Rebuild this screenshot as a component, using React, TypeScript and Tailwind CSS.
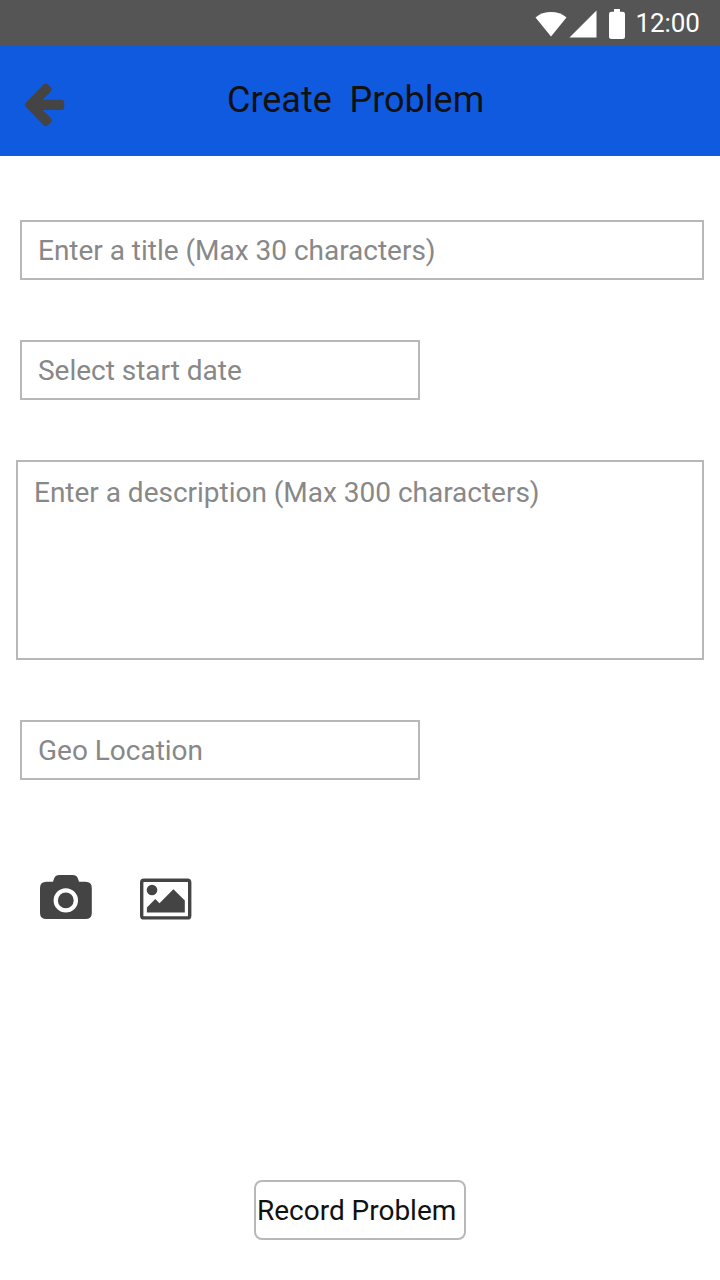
import React from "react";

function BackArrow() {
  return (
    <svg className="mt-[36px] ml-[24px] h-[46px] w-[42px] shrink-0" viewBox="24 82 42 46" fill="#444444">
      <path d="M25.500 103.100 43.600 84.400Q45.800 82.500 48.100 84.400L50.700 87Q52.700 89.400 50.700 91.700L42.600 99.700H61.300Q64.200 99.700 64.200 102.500V107.300Q64.200 110 61.300 110H42.600L50.700 118Q52.700 120.300 50.700 122.600L48.100 125.200Q45.800 127 43.600 125.200L25.500 106.400Q24.400 104.700 25.500 103.100Z" />
    </svg>
  );
}

function Camera() {
  return (
    <svg className="h-[52px] w-[52px]" viewBox="40 872 52 52" fill="#444444">
      <path fillRule="evenodd" d="M46.500 881.800H53L54.200 878.200Q55.500 875 59.500 875H72.500Q76.600 875 77.800 878.200L79 881.800H85.500Q91.800 881.800 91.800 888V913Q91.800 919 85.500 919H46.500Q40 919 40 913V888Q40 881.800 46.500 881.800ZM65.800 888.200A12.200 12.200 0 1 0 65.800 912.600A12.200 12.200 0 1 0 65.800 888.200Z" />
      <circle cx="65.8" cy="900.4" r="7.9" />
    </svg>
  );
}

function Picture() {
  return (
    <svg className="h-[52px] w-[52px]" viewBox="140 872 52 52" fill="#444444">
      <rect x="141.7" y="880.2" width="48" height="37.7" rx="2.2" fill="none" stroke="#444444" strokeWidth="3.4" />
      <circle cx="152" cy="890" r="5.300" />
      <path d="M146.900 907.500 155.300 899 159.500 903.300 173.400 889.300 184.800 900.500V912.400H146.900Z" />
    </svg>
  );
}

export default function App() {
  return (
    <div className="flex h-[1280px] w-[720px] flex-col bg-white font-['Roboto',sans-serif] text-[28px] leading-8 tracking-[-0.015px] text-[#888888]">
      <header className="flex h-[46px] shrink-0 items-center bg-[#555555] pl-[535px] text-white">
        <svg className="h-[46px] w-[90px] shrink-0" viewBox="535 0 90 46" fill="currentColor">
          <path d="M535.500 17.500C544 10.200 558 10.200 566.500 17.500L551 36.500Z" />
          <path d="M596.500 10.500V37.500H569.500Z" />
          <path d="M611.500 11.700H614V9H620V11.700H622.500Q625 11.700 625 14V36.500Q625 39 622.500 39H611.500Q609 39 609 36.500V14Q609 11.700 611.500 11.700Z" />
        </svg>
        <span className="ml-[10.5px] text-[26px] leading-8 tracking-[-0.1px]">12:00</span>
      </header>
      <div className="flex h-[110px] shrink-0 items-start bg-[#105ae0]">
        <BackArrow />
        <h1 className="mt-[32px] ml-[161px] text-[36px] leading-[44px] whitespace-pre text-[#111111]">Create  Problem</h1>
      </div>
      <main className="flex flex-1 flex-col items-start">
        <div className="mt-16 ml-5 flex h-[60px] w-[684px] items-center border-2 border-[#b8b8b8] px-4 pt-0.5">Enter a title (Max 30 characters)</div>
        <div className="mt-[60px] ml-5 flex h-[60px] w-[400px] items-center border-2 border-[#b8b8b8] px-4 pt-0.5">Select start date</div>
        <div className="mt-[60px] ml-4 h-[200px] w-[688px] border-2 border-[#b8b8b8] px-4 py-[15px]">Enter a description (Max 300 characters)</div>
        <div className="mt-[60px] ml-5 flex h-[60px] w-[400px] items-center border-2 border-[#b8b8b8] px-4 pt-0.5">Geo Location</div>
        <div className="mt-[92px] ml-10 flex h-[52px] gap-12">
          <Camera />
          <Picture />
        </div>
        <button className="mt-[256px] ml-[254px] h-[60px] w-[212px] rounded-lg border-2 border-[#b8b8b8] pt-0.5 pl-px text-left text-[#111111]">Record Problem</button>
      </main>
    </div>
  );
}
